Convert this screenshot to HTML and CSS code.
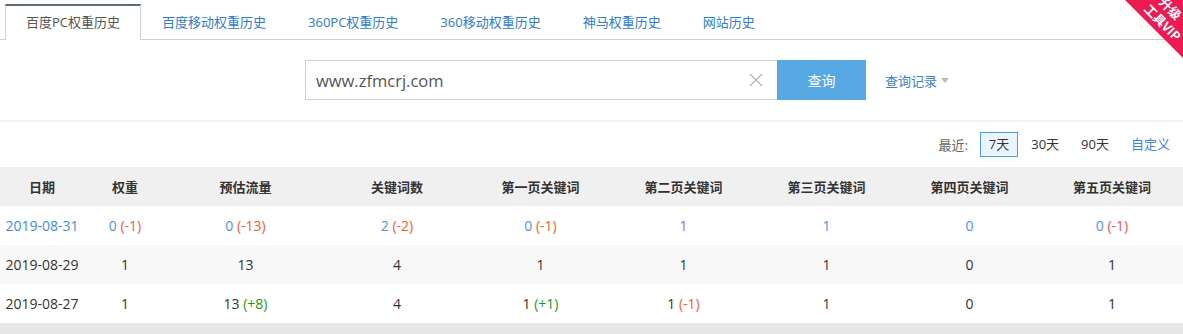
FILE: index.html
```html
<!DOCTYPE html>
<html lang="zh-CN">
<head>
<meta charset="utf-8">
<title>权重历史</title>
<link rel="stylesheet" href="styles.css">
</head>
<body>
<div class="page">
  <div class="tabs">
    <a class="tab active">百度PC权重历史</a>
    <a class="tab">百度移动权重历史</a>
    <a class="tab">360PC权重历史</a>
    <a class="tab">360移动权重历史</a>
    <a class="tab">神马权重历史</a>
    <a class="tab">网站历史</a>
  </div>
  <svg class="ribbon" width="60" height="60" viewBox="0 0 60 60">
    <polygon points="2,0 60,0 60,58" fill="#ec1a52"/>
    <text class="ribbon-text" transform="translate(48 8) rotate(45)" text-anchor="middle" dominant-baseline="central">升级</text>
    <text class="ribbon-text" transform="translate(40 22) rotate(45)" text-anchor="middle" dominant-baseline="central">工具VIP</text>
  </svg>

  <div class="search">
    <div class="search-box">
      <span class="search-value">www.zfmcrj.com</span>
      <svg class="clear" width="14" height="14" viewBox="0 0 14 14">
        <path d="M1 1 L13 13 M13 1 L1 13" stroke="#b5b5b5" stroke-width="1.2" fill="none"/>
      </svg>
    </div>
    <button class="search-btn">查询</button>
    <a class="history">查询记录<span class="caret"></span></a>
  </div>
  <div class="divider"></div>

  <div class="filter">
    <span class="filter-label">最近:</span>
    <span class="opt selected">7天</span>
    <span class="opt">30天</span>
    <span class="opt">90天</span>
    <span class="opt link">自定义</span>
  </div>

  <table class="data">
    <colgroup>
      <col class="c1"><col class="c2"><col class="c3"><col class="c4"><col class="c5"><col class="c5"><col class="c5"><col class="c5"><col class="c9">
    </colgroup>
    <thead>
      <tr>
        <th>日期</th><th>权重</th><th>预估流量</th><th>关键词数</th><th>第一页关键词</th><th>第二页关键词</th><th>第三页关键词</th><th>第四页关键词</th><th>第五页关键词</th>
      </tr>
    </thead>
    <tbody>
      <tr class="latest">
        <td class="date">2019-08-31</td>
        <td>0 <span class="dn-r">(-1)</span></td>
        <td>0 <span class="dn-o">(-13)</span></td>
        <td>2 <span class="dn-o">(-2)</span></td>
        <td>0 <span class="dn-o">(-1)</span></td>
        <td class="purple">1</td>
        <td>1</td>
        <td>0</td>
        <td>0 <span class="dn-r">(-1)</span></td>
      </tr>
      <tr class="alt">
        <td>2019-08-29</td><td>1</td><td>13</td><td>4</td><td>1</td><td>1</td><td>1</td><td>0</td><td>1</td>
      </tr>
      <tr>
        <td>2019-08-27</td><td>1</td><td>13 <span class="up">(+8)</span></td><td>4</td><td>1 <span class="up">(+1)</span></td><td>1 <span class="dn-o">(-1)</span></td><td>1</td><td>0</td><td>1</td>
      </tr>
    </tbody>
  </table>
  <div class="band"></div>
</div>
</body>
</html>
```

FILE: styles.css
```css
html, body {
  margin: 0;
  padding: 0;
  background: #fff;
}
body {
  font-family: "Open Sans", "Noto Sans CJK SC", sans-serif;
  color: #333;
}
.page {
  position: relative;
  width: 1183px;
  overflow: hidden;
}

/* Tabs */
.tabs {
  display: flex;
  height: 40px;
  box-sizing: border-box;
  padding: 4px 0 0 5px;
  border-bottom: 1px solid #c9d1dc;
}
.tab {
  display: block;
  box-sizing: border-box;
  height: 36px;
  padding: 0 20px;
  border: 1px solid transparent;
  border-bottom: none;
  font-size: 13px;
  line-height: 34px;
  color: #2f7bd1;
  white-space: nowrap;
}
.tab.active {
  border-color: #c9d1dc;
  border-top: 2px solid #5d6b7c;
  background: #fff;
  color: #555;
  line-height: 33px;
}

/* Ribbon */
.ribbon {
  position: absolute;
  top: 0;
  right: 0;
}
.ribbon-text {
  fill: #fff;
  font-size: 12.5px;
  font-weight: 700;
  font-family: "Noto Sans CJK SC", "Open Sans", sans-serif;
}

/* Search */
.search {
  display: flex;
  align-items: center;
  height: 80px;
  padding-left: 305px;
}
.search-box {
  display: flex;
  align-items: center;
  justify-content: space-between;
  box-sizing: border-box;
  width: 472px;
  height: 40px;
  border: 1px solid #c9d1dc;
  border-right: none;
  padding: 0 14px 0 10px;
}
.search-value {
  font-size: 16.5px;
  color: #555;
}
.search-btn {
  width: 89px;
  height: 40px;
  border: none;
  background: #56a8e3;
  color: #fff;
  font-family: "Noto Sans CJK SC", sans-serif;
  font-size: 14px;
  padding: 0;
}
.history {
  display: flex;
  align-items: center;
  margin-left: 19px;
  font-size: 13px;
  color: #3a7fd5;
}
.caret {
  width: 0;
  height: 0;
  margin-left: 4px;
  border-left: 4px solid transparent;
  border-right: 4px solid transparent;
  border-top: 5px solid #bbb;
}
.divider {
  height: 2px;
  background: #f3f3f3;
}

/* Filter */
.filter {
  display: flex;
  align-items: center;
  justify-content: flex-end;
  height: 45px;
  padding-right: 4px;
  font-size: 13px;
}
.filter-label {
  color: #666;
  margin-right: 12px;
}
.opt {
  box-sizing: border-box;
  height: 25px;
  line-height: 23px;
  padding: 0 8px;
  border: 1px solid transparent;
  margin-right: 4px;
  color: #333;
}
.opt:last-child {
  margin-right: 0;
}
.opt.selected {
  border-color: #4ca0e6;
  background: #eaf4fe;
}
.opt.link {
  color: #3a86dc;
}

/* Table */
.data {
  width: 1183px;
  border-collapse: collapse;
  table-layout: fixed;
}
.c1 { width: 84px; }
.c2 { width: 82px; }
.c3 { width: 159px; }
.c4 { width: 144px; }
.c5 { width: 143px; }
.c9 { width: 142px; }
.data th {
  height: 39px;
  padding: 0;
  background: #f0f0f0;
  font-family: "Noto Sans CJK SC", sans-serif;
  font-size: 13px;
  font-weight: 700;
  color: #333;
  text-align: center;
}
.data td {
  height: 39px;
  padding: 0;
  font-size: 14px;
  text-align: center;
  color: #333;
  white-space: nowrap;
}
.data tr.alt td {
  background: #f8f8f8;
}
.data tr.latest td {
  color: #4d94ea;
}
.data tr.latest td.date {
  color: #3b8ee3;
}
.data tr.latest td.purple {
  color: #9a6ee0;
}
.dn-r { color: #f65158; }
.dn-o { color: #ff5a22; }
.up { color: #1a9a1a; }
.data tr.latest .dn-r { color: #f65158; }
.data tr.latest .dn-o { color: #ff5a22; }

.band {
  height: 12px;
  background: #e6e6e6;
}
```
